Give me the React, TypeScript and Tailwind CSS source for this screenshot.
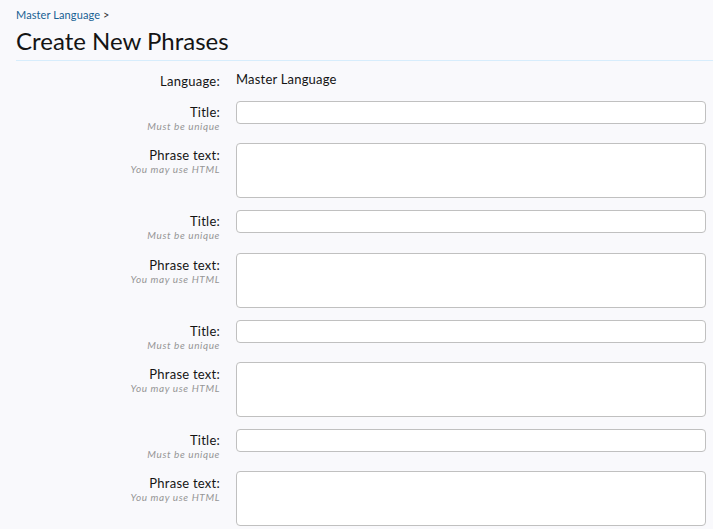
const groups = [0, 1, 2, 3];

function Label({ text, hint, pt }: { text: string; hint?: string; pt: string }) {
  return (
    <div className={`w-[204px] shrink-0 text-right ${pt}`}>
      <div className="text-[13px] leading-[16px] tracking-[0.25px] text-[#141414]">{text}</div>
      {hint && (
        <div className="mt-[1px] text-[10px] leading-[11px] italic tracking-[0.6px] text-[#969696]">{hint}</div>
      )}
    </div>
  );
}

export default function App() {
  return (
    <div className="min-h-screen bg-[#f9f9fc] pl-4 pt-[8px] font-['Lato',sans-serif] text-[#141414]">
      {/* Breadcrumb + heading */}
      <div className="text-[11px] leading-[14px] tracking-[0.1px] text-[#176093]">
        Master Language <span className="text-[#333]">&gt;</span>
      </div>
      <h1 className="mt-[5px] pb-[5px] text-[24px] leading-[28px] border-b border-[#d7edfc]">Create New Phrases</h1>

      <form className="pr-[7px]">
        <div className="flex h-[40px]">
          <Label text="Language:" pt="pt-[12px]" />
          <div className="ml-4 pt-[10px] text-[13px] leading-[16px] tracking-[0.2px]">Master Language</div>
        </div>

        {groups.map((g) => (
          <div key={g}>
            <div className={`flex ${g === 1 ? "h-[43px]" : "h-[42px]"}`}>
              <Label text="Title:" hint="Must be unique" pt="pt-[3px]" />
              <input
                type="text"
                className="ml-4 h-[23px] flex-1 rounded-[4px] border border-[#c0c0c0] bg-white px-1 text-[13px] outline-none"
              />
            </div>
            <div className="flex h-[67px]">
              <Label text="Phrase text:" hint="You may use HTML" pt="pt-[4px]" />
              <textarea className="ml-4 h-[55px] flex-1 resize-none rounded-[4px] border border-[#c0c0c0] bg-white px-1 text-[13px] outline-none" />
            </div>
          </div>
        ))}
      </form>
    </div>
  );
}
